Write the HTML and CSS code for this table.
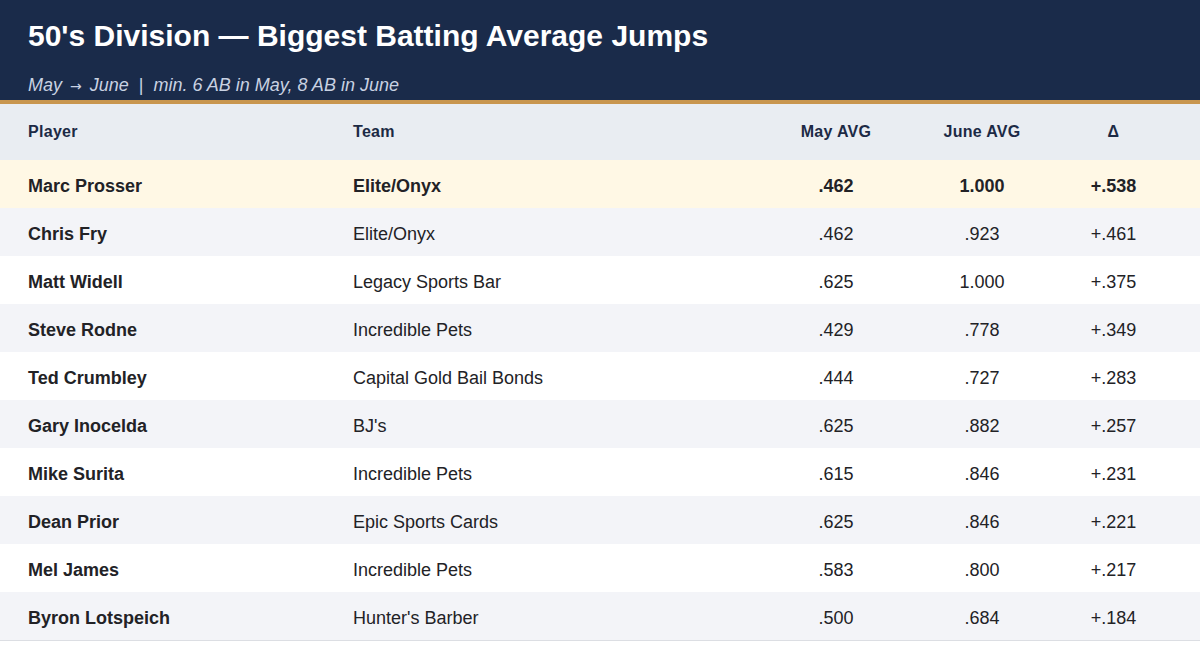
FILE: index.html
```html
<!DOCTYPE html>
<html lang="en">
<head>
<meta charset="utf-8">
<title>50's Division — Biggest Batting Average Jumps</title>
<link rel="stylesheet" href="styles.css">
</head>
<body>
<header class="banner">
  <h1 class="title">50's Division — Biggest Batting Average Jumps</h1>
  <p class="subtitle">May <span class="arrow">→</span> June <span class="sep">|</span> min. 6 AB in May, 8 AB in June</p>
</header>
<div class="table">
  <div class="row head">
    <div class="c-player">Player</div>
    <div class="c-team">Team</div>
    <div class="c-num">May AVG</div>
    <div class="c-num">June AVG</div>
    <div class="c-num">Δ</div>
  </div>
  <div class="row top">
    <div class="c-player">Marc Prosser</div>
    <div class="c-team">Elite/Onyx</div>
    <div class="c-num">.462</div>
    <div class="c-num">1.000</div>
    <div class="c-num">+.538</div>
  </div>
  <div class="row alt">
    <div class="c-player">Chris Fry</div>
    <div class="c-team">Elite/Onyx</div>
    <div class="c-num">.462</div>
    <div class="c-num">.923</div>
    <div class="c-num">+.461</div>
  </div>
  <div class="row">
    <div class="c-player">Matt Widell</div>
    <div class="c-team">Legacy Sports Bar</div>
    <div class="c-num">.625</div>
    <div class="c-num">1.000</div>
    <div class="c-num">+.375</div>
  </div>
  <div class="row alt">
    <div class="c-player">Steve Rodne</div>
    <div class="c-team">Incredible Pets</div>
    <div class="c-num">.429</div>
    <div class="c-num">.778</div>
    <div class="c-num">+.349</div>
  </div>
  <div class="row">
    <div class="c-player">Ted Crumbley</div>
    <div class="c-team">Capital Gold Bail Bonds</div>
    <div class="c-num">.444</div>
    <div class="c-num">.727</div>
    <div class="c-num">+.283</div>
  </div>
  <div class="row alt">
    <div class="c-player">Gary Inocelda</div>
    <div class="c-team">BJ's</div>
    <div class="c-num">.625</div>
    <div class="c-num">.882</div>
    <div class="c-num">+.257</div>
  </div>
  <div class="row">
    <div class="c-player">Mike Surita</div>
    <div class="c-team">Incredible Pets</div>
    <div class="c-num">.615</div>
    <div class="c-num">.846</div>
    <div class="c-num">+.231</div>
  </div>
  <div class="row alt">
    <div class="c-player">Dean Prior</div>
    <div class="c-team">Epic Sports Cards</div>
    <div class="c-num">.625</div>
    <div class="c-num">.846</div>
    <div class="c-num">+.221</div>
  </div>
  <div class="row">
    <div class="c-player">Mel James</div>
    <div class="c-team">Incredible Pets</div>
    <div class="c-num">.583</div>
    <div class="c-num">.800</div>
    <div class="c-num">+.217</div>
  </div>
  <div class="row alt last">
    <div class="c-player">Byron Lotspeich</div>
    <div class="c-team">Hunter's Barber</div>
    <div class="c-num">.500</div>
    <div class="c-num">.684</div>
    <div class="c-num">+.184</div>
  </div>
</div>
</body>
</html>
```
FILE: styles.css
```css
html, body {
  margin: 0;
  padding: 0;
  background: #ffffff;
  font-family: "Liberation Sans", Arial, sans-serif;
  color: #222226;
}

.banner {
  background: #1a2b4a;
  border-bottom: 4px solid #c8964f;
  height: 100px;
  box-sizing: content-box;
  padding: 0 28px;
  display: flex;
  flex-direction: column;
}

.title {
  margin: 0;
  padding-top: 18px;
  font-size: 30px;
  line-height: 36px;
  font-weight: 700;
  color: #ffffff;
}

.subtitle {
  margin: 0;
  margin-top: 20px;
  font-size: 18px;
  line-height: 22px;
  font-style: italic;
  color: #c9d2e2;
}

.arrow {
  font-style: normal;
  font-family: "DejaVu Sans", sans-serif;
  font-size: 14px;
  margin: 0 3px;
}

.sep {
  margin: 0 5px;
  font-style: normal;
}

.table {
  display: flex;
  flex-direction: column;
}

.row {
  display: grid;
  grid-template-columns: 325px 410px 146px 146px 117px;
  padding: 4px 28px 0;
  box-sizing: border-box;
  height: 48px;
  align-items: center;
  font-size: 18px;
  background: #ffffff;
}

.row.head {
  height: 56px;
  padding-top: 0;
  background: #e9edf2;
  font-size: 16px;
  letter-spacing: 0.3px;
  font-weight: 700;
  color: #1c2a45;
}

.row.alt {
  background: #f3f4f8;
}

.row.top {
  background: #fff8e5;
  font-weight: 700;
}

.row.last {
  border-bottom: 1px solid #dcdee3;
  height: 49px;
}

.c-player {
  font-weight: 700;
}

.c-num {
  text-align: center;
}
```
